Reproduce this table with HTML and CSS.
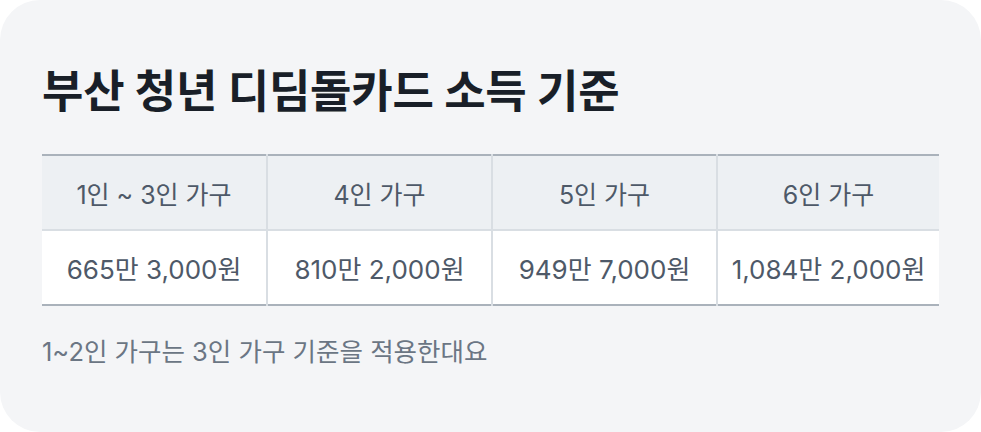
FILE: index.html
```html
<!DOCTYPE html>
<html lang="ko">
<head>
<meta charset="utf-8">
<link rel="stylesheet" href="styles.css">
</head>
<body>
<section class="card">
  <h1 class="title">부산 청년 디딤돌카드 소득 기준</h1>
  <table class="income">
    <colgroup>
      <col class="col-wide">
      <col class="col-wide">
      <col class="col-wide">
      <col class="col-last">
    </colgroup>
    <thead>
      <tr>
        <th>1인 ~ 3인 가구</th>
        <th>4인 가구</th>
        <th>5인 가구</th>
        <th>6인 가구</th>
      </tr>
    </thead>
    <tbody>
      <tr>
        <td>665만 3,000원</td>
        <td>810만 2,000원</td>
        <td>949만 7,000원</td>
        <td>1,084만 2,000원</td>
      </tr>
    </tbody>
  </table>
  <p class="note">1~2인 가구는 3인 가구 기준을 적용한대요</p>
</section>
</body>
</html>
```
FILE: styles.css
```css
html, body {
  margin: 0;
  padding: 0;
  background: #ffffff;
}
body {
  font-family: "Inter", "Noto Sans CJK KR", sans-serif;
}
.card {
  box-sizing: border-box;
  width: 981px;
  height: 432px;
  background: #f4f5f7;
  border-radius: 40px;
  padding: 62px 42px 0 42px;
}
.title {
  margin: 0;
  font-size: 45px;
  font-weight: 700;
  color: #191f28;
  line-height: 60px;
  letter-spacing: -0.2px;
}
.income {
  margin-top: 32px;
  width: 897px;
  border-collapse: collapse;
  table-layout: fixed;
  border-top: 2px solid #aab2bb;
  border-bottom: 2px solid #aab2bb;
}
.col-wide {
  width: 225px;
}
.col-last {
  width: 222px;
}
.income th,
.income td {
  height: 73px;
  padding: 0;
  text-align: center;
  font-size: 26px;
  color: #4e5968;
  font-weight: 400;
  border-left: 2px solid #d9dee3;
}
.income th:first-child,
.income td:first-child {
  border-left: none;
}
.income th {
  font-size: 25px;
  background: #edf0f3;
  border-bottom: 2px solid #d9dee3;
}
.income td {
  background: #ffffff;
}
.note {
  margin: 30px 0 0 0;
  font-size: 25.5px;
  color: #6b7684;
  line-height: 32px;
}
```
